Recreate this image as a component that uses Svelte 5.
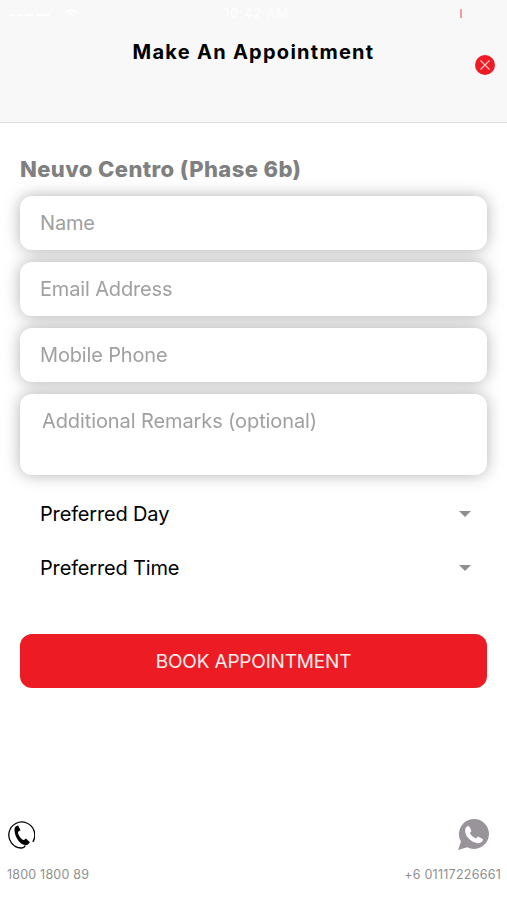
<script lang="ts">
  interface Field {
    id: string;
    placeholder: string;
  }

  const fields: Field[] = [
    { id: 'name', placeholder: 'Name' },
    { id: 'email', placeholder: 'Email Address' },
    { id: 'mobile', placeholder: 'Mobile Phone' }
  ];
  const choices = ['Preferred Day', 'Preferred Time'];

  let values = $state<Record<string, string>>({ name: '', email: '', mobile: '' });
  let remarks = $state('');
</script>

<main>
  <header>
    <div class="status">
      <svg class="signal" viewBox="0 0 80 16">
        <path d="M10 10h5M18 10h4M25 10h8M36 10h13" />
        <path d="M66 7q5-4 10 0M69 10q2-2 4 0" />
      </svg>
      <span>10:42 AM</span>
      <i></i>
    </div>
    <h1>Make An Appointment</h1>
    <button class="close" aria-label="Close">
      <svg viewBox="0 0 20 20">
        <circle cx="10" cy="10" r="10" />
        <path d="M5.500 5.500l9 9M14.500 5.500l-9 9" />
      </svg>
    </button>
  </header>

  <form onsubmit={(event) => event.preventDefault()}>
    <h2>Neuvo Centro (Phase 6b)</h2>

    <div class="fields">
      {#each fields as field (field.id)}
        <input placeholder={field.placeholder} bind:value={values[field.id]} />
      {/each}
      <textarea placeholder="Additional Remarks (optional)" bind:value={remarks}></textarea>
    </div>

    <div class="choices">
      {#each choices as choice}
        <button type="button" class="choice">
          <span>{choice}</span>
          <svg viewBox="0 0 12 6"><path d="M0 0h12L6 6z" /></svg>
        </button>
      {/each}
    </div>

    <button class="book">BOOK APPOINTMENT</button>
  </form>

  <footer>
    <div class="contact">
      <svg class="phone" viewBox="0 0 28 28">
        <path class="ring" d="M25.900 20.800A13 13 0 1 0 14 27c2 0 3.800-.8 4.100-2.600" />
        <path d="M8.400 5.800l2.600-1.500 2.500 4.900-2.100 1.300c-.9.600-.1 3.300 1.500 5.500 1.600 2.300 3.500 3.500 4.500 2.800l1.500-1.300 4 3.800-2 2.100c-2.400 1.700-6.600.1-9.700-4C7.900 15 6.400 8 8.400 5.800z" />
      </svg>
      <span>1800 1800 89</span>
    </div>
    <div class="contact right">
      <svg class="whatsapp" viewBox="0 0 30 30">
        <path d="M15.500 0A14.500 14.500 0 0 1 30 14.500 14.500 14.500 0 0 1 8.800 27.400L0 30l2.900-8.200A14.500 14.500 0 0 1 15.500 0z" />
        <path class="handset" d="M8.600 7.300c1-.9 2-.8 2.500.3l1.600 3.200c.4 1-.1 1.700-1.200 2.700 1.100 2.300 3.400 4.400 5.900 5.400 1-1.400 1.900-2 2.800-1.600l3.300 1.700c.9.500.9 1.400.2 2.300-1.200 1.800-3.200 2.500-5.700 1.900C12.500 21.900 8.100 17.700 7 12.800c-.5-2.200.1-4.300 1.600-5.500z" />
      </svg>
      <span>+6 01117226661</span>
    </div>
  </footer>
</main>

<style>
  :global(body) { background: #fff; }
  main { display: flex; flex-direction: column; height: 900px; overflow: hidden; font-family: Inter, "Liberation Sans", sans-serif; }
  button { padding: 0; border: 0; background: none; font: inherit; cursor: pointer; }
  svg { display: block; }

  header { position: relative; box-sizing: border-box; height: 123px; background: #f8f8f8; border-bottom: 1px solid #dcdcdc; }
  .status { display: grid; grid-template-columns: 224px 1fr 47px; align-items: center; height: 26px; color: #fff; font-size: 13px; letter-spacing: .9px; }
  .signal { width: 80px; height: 20px; fill: none; stroke: #fff; stroke-width: 2; }
  .status i { width: 2px; height: 9px; background: #f79a9d; }
  h1 { margin: 12px 0 0; text-align: center; font-size: 20px; line-height: 28px; font-weight: 700; letter-spacing: 1.270px; color: #000; }
  .close { position: absolute; right: 12.500px; top: 55px; width: 20px; height: 20px; }
  .close circle { fill: #ed1c24; }
  .close path { fill: none; stroke: #ffc9cb; stroke-width: 1.100; }

  form { display: flex; flex-direction: column; padding: 32px 20px 0; }
  h2 { margin: 0; font-size: 22px; line-height: 28px; font-weight: 800; letter-spacing: .4px; color: #808080; }
  .fields { display: flex; flex-direction: column; gap: 12px; margin-top: 13px; filter: drop-shadow(0 0 8px rgba(0, 0, 0, .3)); }
  input, textarea { box-sizing: border-box; width: 100%; margin: 0; border: 0; border-radius: 12px; outline: 0; background: #fff; font: 400 20px/26px Inter, "Liberation Sans", sans-serif; letter-spacing: -.15px; color: #000; }
  input { height: 54px; padding: 0 20px; }
  textarea { display: block; height: 81px; padding: 14px 22px; letter-spacing: -.1px; resize: none; }
  input::placeholder, textarea::placeholder { color: #a0a0a0; opacity: 1; }

  .choices { margin-top: 12px; }
  .choice { display: flex; align-items: center; justify-content: space-between; width: 100%; height: 54px; padding: 0 16px 0 20px; font-size: 20px; letter-spacing: -.16px; color: #000; }
  .choice svg { width: 12px; height: 6px; fill: #8e8e8e; }
  .book { height: 54px; margin-top: 39px; border-radius: 12px; background: #ed1c24; color: #ffeced; font-size: 19px; letter-spacing: -.18px; }

  footer { display: flex; align-items: flex-end; justify-content: space-between; margin-top: auto; padding: 0 6px 16px 7px; color: #8f8f8f; font-size: 12.500px; line-height: 18px; letter-spacing: .2px; }
  .contact { display: grid; gap: 16px; }
  .right { justify-items: end; letter-spacing: .25px; }
  .phone { width: 28px; height: 28px; margin-bottom: 1px; fill: #000; }
  .ring { fill: none; stroke: #000; stroke-width: 1.300; }
  .whatsapp { width: 31px; height: 31px; margin-right: 12px; fill: #99949a; }
  .handset { fill: #fff; }
</style>
